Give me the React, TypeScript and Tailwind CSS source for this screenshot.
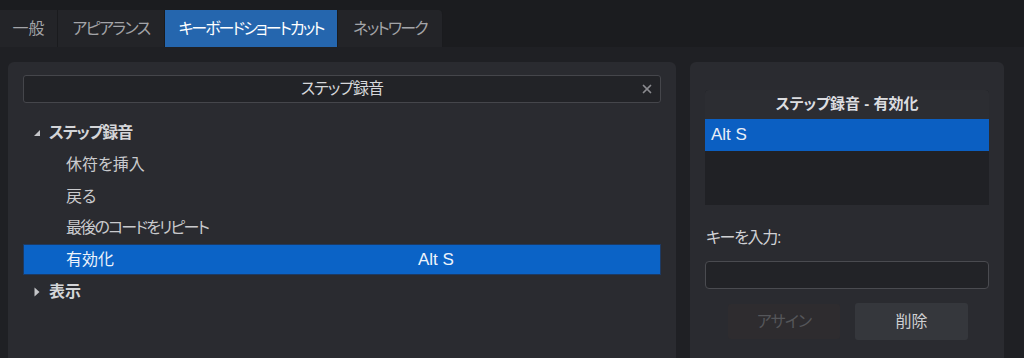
import { X } from 'lucide-react';

const tabs = [
  { label: '一般', w: 'w-[58px]', tr: '' },
  { label: 'アピアランス', w: 'w-[107px]', tr: 'tracking-[-1.6px]' },
  { label: 'キーボードショートカット', w: 'w-[173px]', tr: 'tracking-[-2px]' },
  { label: 'ネットワーク', w: 'w-[105px] rounded-tr-[4px]', tr: 'tracking-[-1.8px]' },
];

const font = "font-['Liberation_Sans','Noto_Sans_CJK_JP',sans-serif] [font-feature-settings:'palt']";

export default function App() {
  return (
    <div className={`w-[1024px] h-[358px] overflow-hidden bg-[#1f2024] text-[16px] text-[#c9cacd] ${font}`}>
      {/* Tabs */}
      <div className="h-[47px] pt-[10px] bg-[#1b1c1f]">
        <div className="flex h-[37px]">
          {tabs.map((t, i) => (
            <div
              key={t.label}
              className={`flex items-center justify-center border-r border-[#1a1b1e] ${t.w} ${t.tr} ${
                i === 2 ? 'bg-[#2566ae] text-white' : 'bg-[#232428] text-[#a3a4a8]'
              }`}
            >
              {t.label}
            </div>
          ))}
        </div>
      </div>

      <div className="flex pt-[15px] pl-[8px] gap-[14px]">
        {/* Left panel */}
        <div className="w-[668px] h-[300px] bg-[#2a2b30] rounded-t-[6px] px-[15px] pt-[13px]">
          <div className="relative h-[28px] rounded-[3px] border border-[#45464b] bg-[#222327] flex items-center justify-center text-[#d6d7da] tracking-[-1px]">
            ステップ録音
            <X size={14} strokeWidth={3} className="absolute right-[6px] top-[6px] text-[#8a8b8f]" />
          </div>
          <div className="mt-[14px]">
            <div className="h-8 flex items-center pl-[10px] font-bold text-[#d4d5d8]">
              <svg width="8" height="8" viewBox="0 0 8 8" className="mr-[8px]">
                <path d="M7 1 L7 7 L1 7 Z" fill="#c4c5c8" />
              </svg>
              <span className="tracking-[-1.2px]">ステップ録音</span>
            </div>
            <div className="h-8 flex items-center pl-[43px]">休符を挿入</div>
            <div className="h-[31px] flex items-center pl-[43px]">戻る</div>
            <div className="h-[32px] flex items-center pl-[43px] tracking-[-1.8px]">最後のコードをリピート</div>
            <div className="h-[31px] flex items-center pl-[42px] bg-[#0b63c6] border border-[#1d3a63] text-[#eef3fb]">
              <span className="w-[352px]">有効化</span>
              <span className="text-[17px]">Alt S</span>
            </div>
            <div className="h-[34px] flex items-center pl-[11px] font-bold text-[#d4d5d8]">
              <svg width="6" height="10" viewBox="0 0 6 10" className="mr-[9px]">
                <path d="M0.5 0.5 L5.5 5 L0.5 9.5 Z" fill="#c4c5c8" />
              </svg>
              表示
            </div>
          </div>
        </div>

        {/* Right panel */}
        <div className="w-[314px] h-[300px] bg-[#2a2b30] rounded-t-[6px] px-[15px] pt-[28px]">
          <div className="h-[115px] rounded-t-[4px] bg-[#202125] overflow-hidden">
            <div className="h-[29px] bg-[#2c2d32] flex items-center justify-center font-bold text-[15px] text-[#dcdde0]">
              ステップ録音 - 有効化
            </div>
            <div className="h-[32px] bg-[#0b5fc2] flex items-center pl-[6px] text-[17px] text-[#e9eef7]">
              Alt S
            </div>
          </div>
          <div className="mt-[23px] pl-[1px] h-[20px] flex items-center text-[#d0d1d4] tracking-[-1.3px]">キーを入力:</div>
          <div className="mt-[13px] h-[28px] rounded-[4px] border border-[#4a4b50] bg-[#222327]" />
          <div className="mt-[15px] flex gap-[15px] pl-[23px]">
            <div className="w-[112px] h-[35px] rounded-[3px] bg-[#2e2c2f] flex items-center justify-center text-[#55565a] tracking-[-1px]">
              アサイン
            </div>
            <div className="w-[113px] h-[37px] -mt-[1px] rounded-[3px] bg-[#35373c] flex items-center justify-center text-[#cfd0d3]">
              削除
            </div>
          </div>
        </div>
      </div>
    </div>
  );
}
